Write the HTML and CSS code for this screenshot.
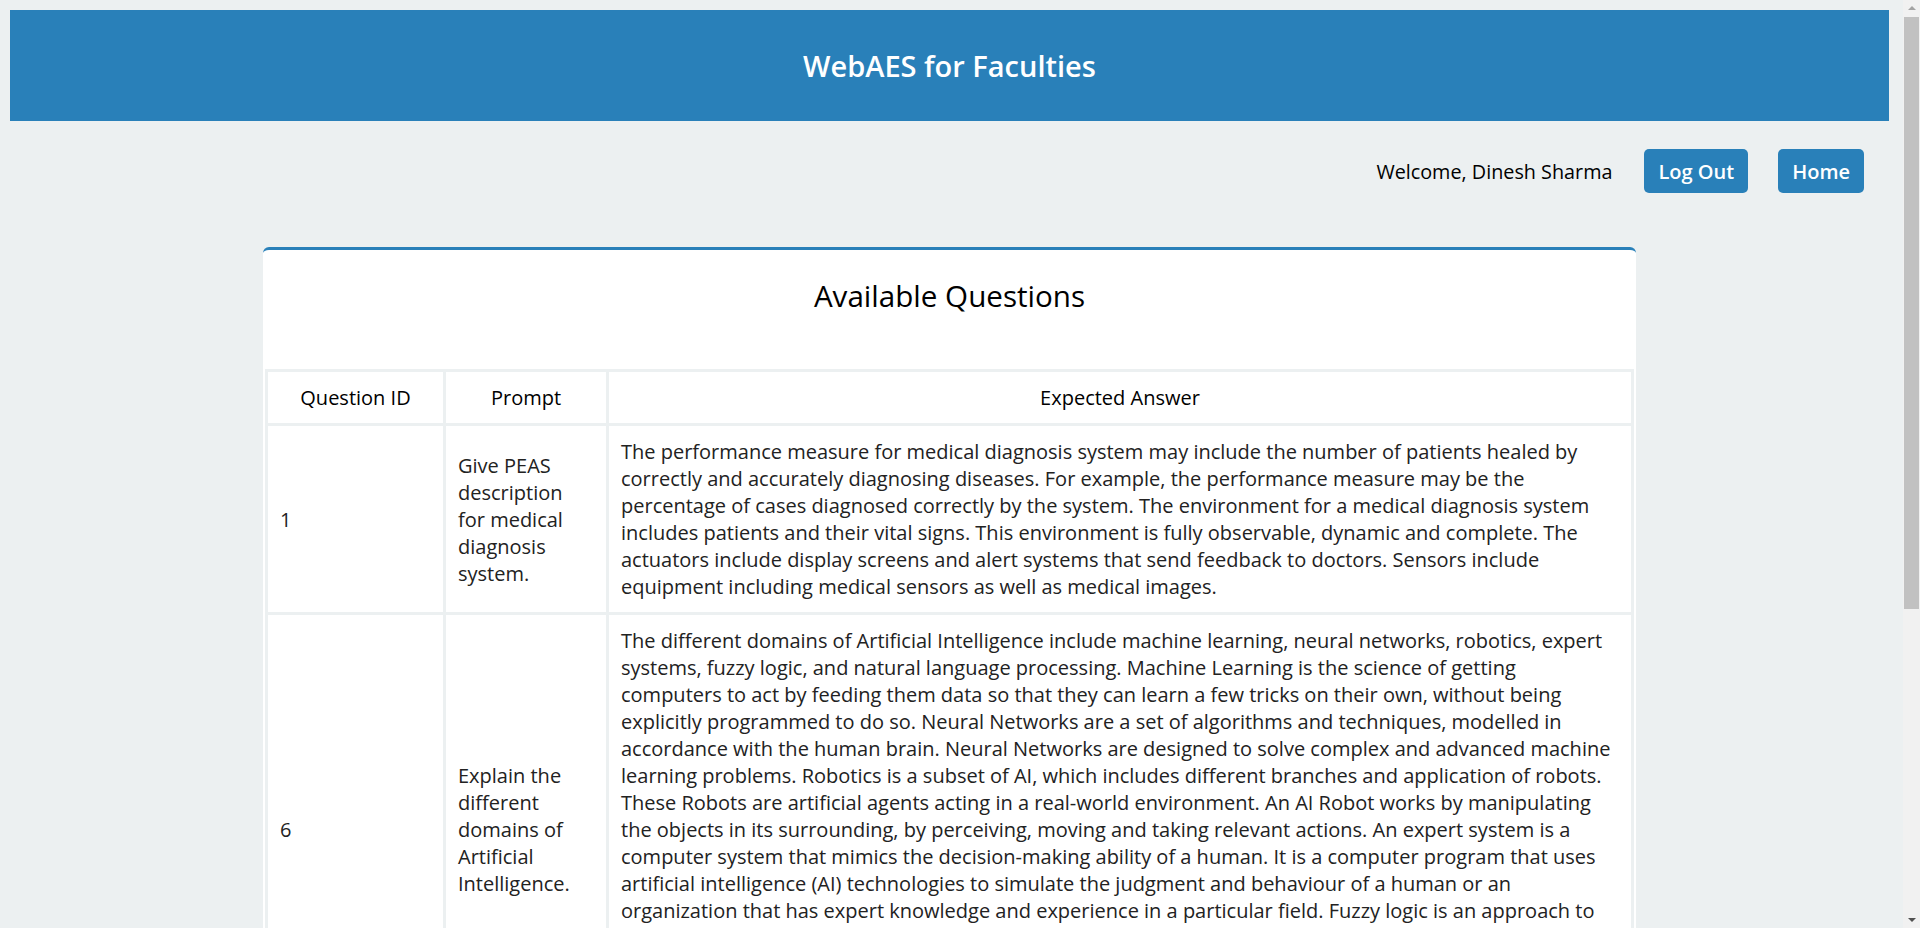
FILE: index.html
```html
<!DOCTYPE html>
<html lang="en">
<head>
<meta charset="utf-8">
<title>WebAES for Faculties</title>
<link rel="stylesheet" href="styles.css">
</head>
<body>
<header class="site-header">
  <h1 class="site-title">WebAES for Faculties</h1>
</header>
<div class="user-bar">
  <span class="welcome">Welcome, Dinesh Sharma</span>
  <a class="btn" href="#">Log Out</a>
  <a class="btn" href="#">Home</a>
</div>
<main class="card">
  <h2 class="card-title">Available Questions</h2>
  <table class="questions">
    <colgroup>
      <col class="col-id">
      <col class="col-prompt">
      <col class="col-answer">
    </colgroup>
    <thead>
      <tr><th>Question ID</th><th>Prompt</th><th>Expected Answer</th></tr>
    </thead>
    <tbody>
      <tr>
        <td>1</td>
        <td>Give PEAS description for medical diagnosis system.</td>
        <td>The performance measure for medical diagnosis system may include the number of patients healed by correctly and accurately diagnosing diseases. For example, the performance measure may be the percentage of cases diagnosed correctly by the system. The environment for a medical diagnosis system includes patients and their vital signs. This environment is fully observable, dynamic and complete. The actuators include display screens and alert systems that send feedback to doctors. Sensors include equipment including medical sensors as well as medical images.</td>
      </tr>
      <tr>
        <td>6</td>
        <td>Explain the different domains of Artificial Intelligence.</td>
        <td>The different domains of Artificial Intelligence include machine learning, neural networks, robotics, expert systems, fuzzy logic, and natural language processing. Machine Learning is the science of getting computers to act by feeding them data so that they can learn a few tricks on their own, without being explicitly programmed to do so. Neural Networks are a set of algorithms and techniques, modelled in accordance with the human brain. Neural Networks are designed to solve complex and advanced machine learning problems. Robotics is a subset of AI, which includes different branches and application of robots. These Robots are artificial agents acting in a real-world environment. An AI Robot works by manipulating the objects in its surrounding, by perceiving, moving and taking relevant actions. An expert system is a computer system that mimics the decision-making ability of a human. It is a computer program that uses artificial intelligence (AI) technologies to simulate the judgment and behaviour of a human or an organization that has expert knowledge and experience in a particular field. Fuzzy logic is an approach to computing based on degrees of truth rather than the usual true or false Boolean logic on which the modern computer is based. Natural Language Processing is a part of computer science and artificial intelligence that deals with human languages. It enables computers to read, understand and interpret human speech and text in a meaningful way.</td>
      </tr>
    </tbody>
  </table>
</main>
<div class="scrollbar" aria-hidden="true">
  <span class="arrow arrow-up"></span>
  <span class="thumb"></span>
  <span class="arrow arrow-down"></span>
</div>
</body>
</html>
```
FILE: styles.css
```css
html, body {
  margin: 0;
  padding: 0;
}
body {
  background: #ecf0f1;
  font-family: "Open Sans", "Noto Sans", sans-serif;
  color: #222;
  padding: 10px 31px 40px 10px;
}
.site-header {
  background: #2980b9;
  height: 111px;
  display: flex;
  align-items: center;
  justify-content: center;
}
.site-title {
  margin: 0;
  color: #fff;
  font-size: 29px;
  font-weight: 600;
}
.user-bar {
  display: flex;
  justify-content: flex-end;
  align-items: center;
  gap: 30px;
  margin-top: 28px;
  padding-right: 25px;
}
.welcome {
  font-size: 19.8px;
  color: #000;
  margin-right: 2px;
}
.btn {
  display: inline-flex;
  align-items: center;
  height: 44px;
  padding: 0 14px;
  box-sizing: border-box;
  background: #2980b9;
  color: #fff;
  border-radius: 5px;
  font-size: 20px;
  font-weight: 600;
  text-decoration: none;
}
.card {
  display: block;
  width: 1373px;
  margin: 54px auto 0;
  background: #fff;
  border-top: 3px solid #2980b9;
  border-radius: 6px;
  padding: 0 0 2px;
  box-sizing: border-box;
}
.card-title {
  margin: 0;
  padding: 27px 0 54px;
  text-align: center;
  font-size: 29.6px;
  font-weight: 400;
  color: #000;
  line-height: 38px;
}
.questions {
  width: calc(100% - 4px);
  margin: 0 auto;
  border-spacing: 3px;
  background: #ecf0f1;
  table-layout: fixed;
  font-size: 20px;
  line-height: 27px;
}
.col-id { width: 175px; }
.col-prompt { width: 160px; }
.questions th,
.questions td {
  background: #fff;
  padding: 12px;
  vertical-align: middle;
}
.questions th {
  font-weight: 500;
  color: #000;
  text-align: center;
}
.questions td {
  text-align: left;
}
.scrollbar {
  position: fixed;
  top: 0;
  right: 0;
  bottom: 0;
  width: 17px;
  background: #f1f1f1;
  display: flex;
  flex-direction: column;
  align-items: center;
}
.arrow {
  width: 0;
  height: 0;
  margin: 6px 0;
  border-left: 4px solid transparent;
  border-right: 4px solid transparent;
}
.arrow-up {
  border-bottom: 4px solid #a3a3a3;
}
.arrow-down {
  margin-top: auto;
  border-top: 4px solid #505050;
}
.thumb {
  width: 15px;
  height: 592px;
  margin-top: 1px;
  background: #c1c1c1;
}
```
